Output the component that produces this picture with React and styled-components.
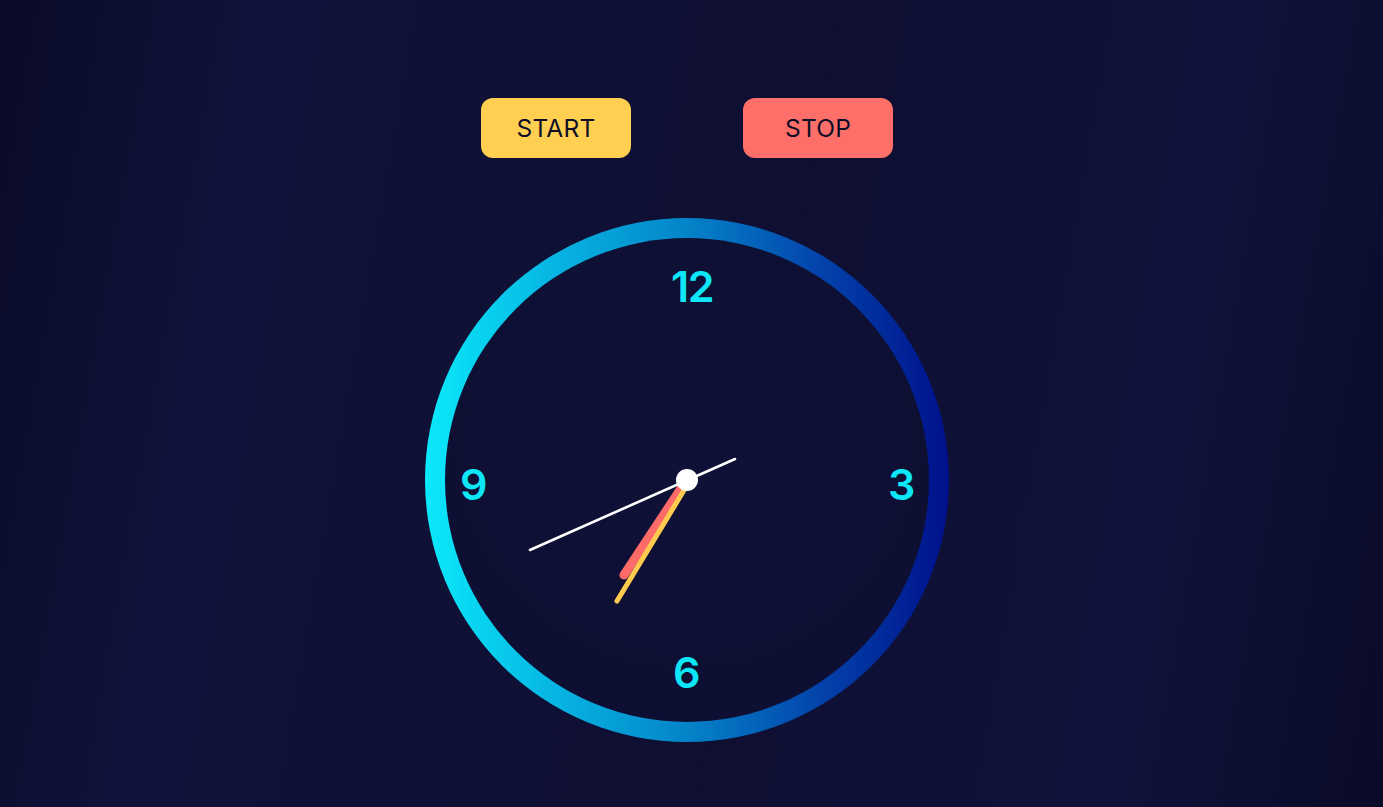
import React from "react";
import styled, { createGlobalStyle } from "styled-components";

const GlobalStyle = createGlobalStyle`
  html, body {
    margin: 0;
    padding: 0;
    height: 100%;
  }
  body {
    font-family: Inter, "Open Sans", sans-serif;
    background: linear-gradient(100deg, #0a0b27 0%, #10123b 17%, #0f1035 38%, #0e0f32 55%, #10123b 82%, #0a0b27 100%);
    min-height: 100vh;
  }
`;

const Page = styled.main`
  min-height: 807px;
  display: flex;
  flex-direction: column;
  align-items: center;
  padding: 98px 9px 0 0;
  box-sizing: border-box;
`;

const ButtonRow = styled.div`
  display: flex;
  gap: 112px;
`;

const ControlButton = styled.button`
  width: 150px;
  height: 60px;
  border: none;
  border-radius: 12px;
  background: ${(p) => p.$color};
  color: #0d0e26;
  font-family: Inter, "Open Sans", sans-serif;
  font-size: 24.5px;
  font-weight: 400;
  letter-spacing: 0.2px;
  cursor: pointer;
  padding: 0;
`;

const Dial = styled.div`
  margin-top: 60px;
  width: 524px;
  height: 524px;
  border-radius: 50%;
  padding: 20px;
  box-sizing: border-box;
  background: linear-gradient(90deg, #0ae9fa 0%, #06b4e2 25%, #0484c9 50%, #0344ab 75%, #00108b 100%);
`;

const Face = styled.div`
  position: relative;
  width: 100%;
  height: 100%;
  border-radius: 50%;
  background: radial-gradient(circle at 50% 40%, #0f1138 0%, #0d0e30 100%);
`;

const Numeral = styled.span`
  position: absolute;
  left: ${(p) => p.$x}px;
  top: ${(p) => p.$y}px;
  transform: translate(-50%, -50%);
  font-family: Inter, "Open Sans", sans-serif;
  font-size: 43px;
  font-weight: 600;
  line-height: 1;
  color: #0de6f7;
  letter-spacing: -1.5px;
`;

const Hands = styled.svg`
  position: absolute;
  inset: 0;
  width: 100%;
  height: 100%;
`;

const numerals = [
  { label: "12", x: 247, y: 48 },
  { label: "3", x: 456, y: 246 },
  { label: "6", x: 241, y: 434 },
  { label: "9", x: 28, y: 246 },
];

export default function App() {
  return (
    <>
      <GlobalStyle />
      <Page>
        <ButtonRow>
          <ControlButton $color="#ffcf52">START</ControlButton>
          <ControlButton $color="#ff6f69">STOP</ControlButton>
        </ButtonRow>
        <Dial>
          <Face>
            {numerals.map((n) => (
              <Numeral key={n.label} $x={n.x} $y={n.y}>
                {n.label}
              </Numeral>
            ))}
            <Hands viewBox="0 0 484 484">
              <line x1="241" y1="243" x2="179" y2="337" stroke="#ff6b68" strokeWidth="9" strokeLinecap="round" />
              <line x1="244" y1="244" x2="172" y2="363" stroke="#ffcb4f" strokeWidth="5" strokeLinecap="round" />
              <line x1="290" y1="221" x2="85" y2="312" stroke="#ffffff" strokeWidth="2.6" strokeLinecap="round" />
              <circle cx="242" cy="242" r="11" fill="#ffffff" />
            </Hands>
          </Face>
        </Dial>
      </Page>
    </>
  );
}
